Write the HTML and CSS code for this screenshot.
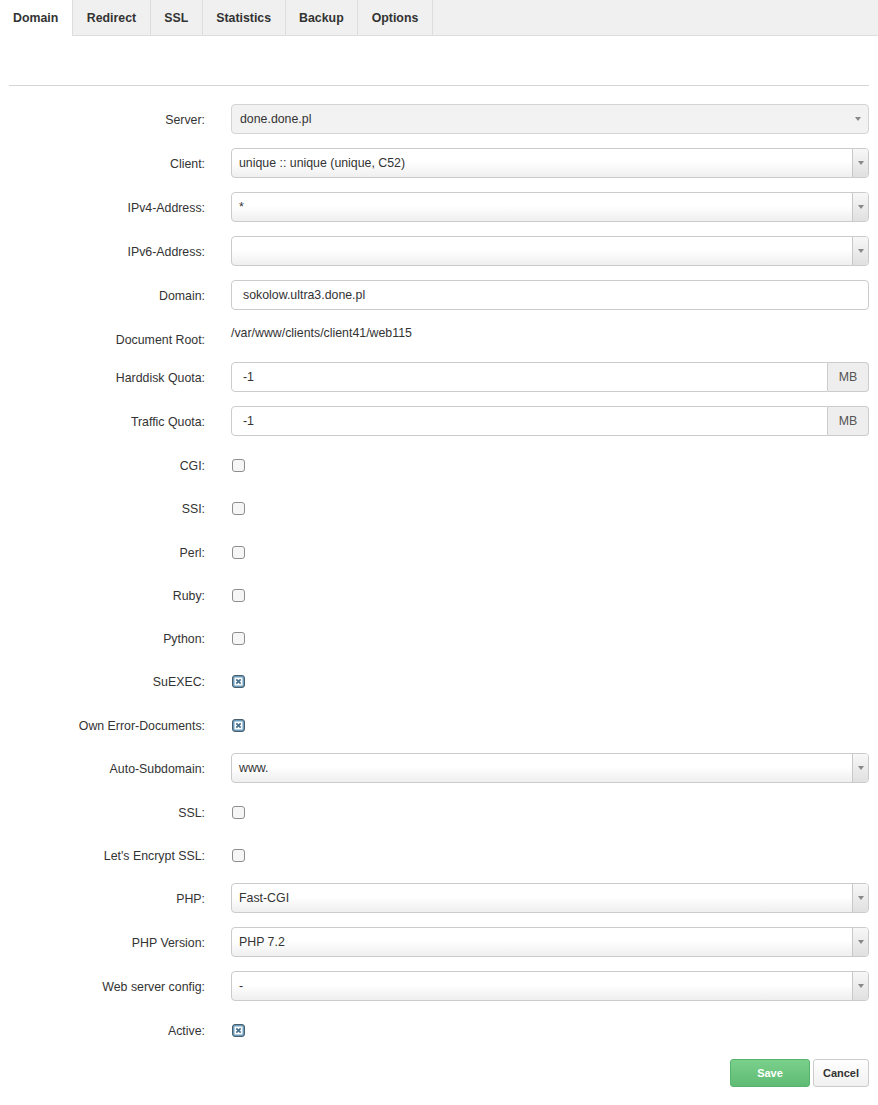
FILE: index.html
```html
<!DOCTYPE html>
<html>
<head>
<meta charset="utf-8">
<link rel="stylesheet" href="styles.css">
</head>
<body>
<div class="tabs">
  <div class="tab active">Domain</div>
  <div class="tab">Redirect</div>
  <div class="tab">SSL</div>
  <div class="tab">Statistics</div>
  <div class="tab">Backup</div>
  <div class="tab">Options</div>
  <div class="tab-fill"></div>
</div>
<div class="content">
  <div class="rule"></div>
  <form class="form">
    <div class="row"><label class="lbl">Server:</label><div class="ctl"><div class="select disabled"><span class="val">done.done.pl</span><span class="arrow"><i class="tri"></i></span></div></div></div>
    <div class="row"><label class="lbl">Client:</label><div class="ctl"><div class="select"><span class="val">unique :: unique (unique, C52)</span><span class="arrow"><i class="tri"></i></span></div></div></div>
    <div class="row"><label class="lbl">IPv4-Address:</label><div class="ctl"><div class="select"><span class="val">*</span><span class="arrow"><i class="tri"></i></span></div></div></div>
    <div class="row"><label class="lbl">IPv6-Address:</label><div class="ctl"><div class="select"><span class="val"></span><span class="arrow"><i class="tri"></i></span></div></div></div>
    <div class="row"><label class="lbl">Domain:</label><div class="ctl"><div class="input">sokolow.ultra3.done.pl</div></div></div>
    <div class="row text-row"><label class="lbl">Document Root:</label><div class="ctl static">/var/www/clients/client41/web115</div></div>
    <div class="row"><label class="lbl">Harddisk Quota:</label><div class="ctl"><div class="group"><div class="input grouped">-1</div><div class="addon">MB</div></div></div></div>
    <div class="row"><label class="lbl">Traffic Quota:</label><div class="ctl"><div class="group"><div class="input grouped">-1</div><div class="addon">MB</div></div></div></div>
    <div class="row cb-row"><label class="lbl">CGI:</label><div class="ctl"><span class="cb"></span></div></div>
    <div class="row cb-row"><label class="lbl">SSI:</label><div class="ctl"><span class="cb"></span></div></div>
    <div class="row cb-row"><label class="lbl">Perl:</label><div class="ctl"><span class="cb"></span></div></div>
    <div class="row cb-row"><label class="lbl">Ruby:</label><div class="ctl"><span class="cb"></span></div></div>
    <div class="row cb-row"><label class="lbl">Python:</label><div class="ctl"><span class="cb"></span></div></div>
    <div class="row cb-row"><label class="lbl">SuEXEC:</label><div class="ctl"><span class="cb checked"><svg viewBox="0 0 13 13" width="13" height="13"><rect x="2.5" y="2.5" width="8" height="8" fill="#fff"/><path d="M4.3 4.3 L8.7 8.7 M8.7 4.3 L4.3 8.7" stroke="#47708c" stroke-width="1.7"/></svg></span></div></div>
    <div class="row cb-row"><label class="lbl">Own Error-Documents:</label><div class="ctl"><span class="cb checked"><svg viewBox="0 0 13 13" width="13" height="13"><rect x="2.5" y="2.5" width="8" height="8" fill="#fff"/><path d="M4.3 4.3 L8.7 8.7 M8.7 4.3 L4.3 8.7" stroke="#47708c" stroke-width="1.7"/></svg></span></div></div>
    <div class="row"><label class="lbl">Auto-Subdomain:</label><div class="ctl"><div class="select"><span class="val">www.</span><span class="arrow"><i class="tri"></i></span></div></div></div>
    <div class="row cb-row"><label class="lbl">SSL:</label><div class="ctl"><span class="cb"></span></div></div>
    <div class="row cb-row"><label class="lbl">Let's Encrypt SSL:</label><div class="ctl"><span class="cb"></span></div></div>
    <div class="row"><label class="lbl">PHP:</label><div class="ctl"><div class="select"><span class="val">Fast-CGI</span><span class="arrow"><i class="tri"></i></span></div></div></div>
    <div class="row"><label class="lbl">PHP Version:</label><div class="ctl"><div class="select"><span class="val">PHP 7.2</span><span class="arrow"><i class="tri"></i></span></div></div></div>
    <div class="row"><label class="lbl">Web server config:</label><div class="ctl"><div class="select"><span class="val">-</span><span class="arrow"><i class="tri"></i></span></div></div></div>
    <div class="row cb-row"><label class="lbl">Active:</label><div class="ctl"><span class="cb checked"><svg viewBox="0 0 13 13" width="13" height="13"><rect x="2.5" y="2.5" width="8" height="8" fill="#fff"/><path d="M4.3 4.3 L8.7 8.7 M8.7 4.3 L4.3 8.7" stroke="#47708c" stroke-width="1.7"/></svg></span></div></div>
    <div class="buttons">
      <button type="button" class="btn save">Save</button>
      <button type="button" class="btn cancel">Cancel</button>
    </div>
  </form>
</div>
</body>
</html>
```

FILE: styles.css
```css
* { box-sizing: border-box; }
body {
  margin: 0;
  font-family: "Liberation Sans", Arial, sans-serif;
  font-size: 12.35px;
  color: #333;
  background: #fff;
}
.tabs {
  display: flex;
  height: 36px;
  background: #f0f0f0;
  border-bottom: 1px solid #ddd;
}
.tab {
  padding: 0 13.5px 0 13.5px;
  line-height: 36px;
  font-weight: bold;
  font-size: 12.35px;
  color: #333;
  border-right: 1px solid #ddd;
  white-space: nowrap;
}
.tab.active {
  background: #fff;
  height: 36px;
  padding: 0 14px 0 13px;
}
.tab-fill { flex: 1; }
.content {
  padding: 0 9px 0 9px;
}
.rule {
  margin-top: 49px;
  border-top: 1px solid #d4d4d4;
  margin-bottom: 18px;
}
.form { display: flex; flex-direction: column; }
.row {
  display: flex;
  margin-bottom: 14px;
  min-height: 30px;
}
.lbl {
  width: 196px;
  flex: none;
  text-align: right;
  padding-top: 8px;
  line-height: 17px;
  color: #333;
}
.ctl {
  flex: 1;
  margin-left: 26px;
  min-width: 0;
}
.text-row { min-height: 24px; height: 24px; }
.static { padding-top: 1px; line-height: 17px; }
.cb-row { min-height: 29.25px; height: 29.25px; }
.select {
  height: 30px;
  border: 1px solid #cbcbcb;
  border-radius: 4px;
  background: linear-gradient(#fff 0%, #fff 45%, #efefef 100%);
  display: flex;
  align-items: stretch;
  overflow: hidden;
}
.select .val {
  flex: 1;
  padding-left: 7px;
  line-height: 29px;
  color: #333;
}
.select .arrow {
  width: 16px;
  border-left: 1px solid #c8c8c8;
  background: linear-gradient(#f7f7f7, #e0e0e0);
  display: flex;
  align-items: center;
  justify-content: center;
}
.tri {
  width: 0; height: 0;
  border-left: 3px solid transparent;
  border-right: 3px solid transparent;
  border-top: 4px solid #888;
}
.select.disabled {
  background: #f2f2f2;
  border-color: #d4d4d4;
}
.select.disabled .val { padding-left: 8px; }
.select.disabled .arrow {
  background: none;
  border-left: none;
  width: 20px;
}
.input {
  height: 30px;
  border: 1px solid #ccc;
  border-radius: 4px;
  padding-left: 11px;
  line-height: 29px;
  color: #333;
  background: #fff;
}
.group { display: flex; }
.input.grouped {
  flex: 1;
  border-radius: 4px 0 0 4px;
}
.addon {
  width: 41px;
  height: 30px;
  border: 1px solid #ccc;
  border-left: none;
  border-radius: 0 4px 4px 0;
  background: #eee;
  text-align: center;
  line-height: 29px;
  color: #555;
}
.cb {
  display: block;
  width: 13px;
  height: 13px;
  margin-top: 9px;
  margin-left: 1px;
  border: 1px solid #8e8e8e;
  border-radius: 3px;
  background: #f6f6f6;
}
.cb.checked {
  border-color: #4a5d6a;
  background: #6b9cbd;
  position: relative;
  overflow: hidden;
}
.cb.checked svg {
  position: absolute;
  left: -1px;
  top: -1px;
}
.buttons {
  display: flex;
  justify-content: flex-end;
  gap: 3px;
}
.btn {
  height: 28px;
  font-family: "Liberation Sans", Arial, sans-serif;
  font-size: 11px;
  font-weight: bold;
  border-radius: 3px;
  cursor: pointer;
}
.save {
  width: 80px;
  color: #fff;
  border: 1px solid #56b36b;
  background: linear-gradient(#7ad08b, #5fbb74);
}
.cancel {
  width: 56px;
  color: #333;
  border: 1px solid #ccc;
  background: linear-gradient(#fff, #f0f0f0);
}
```
